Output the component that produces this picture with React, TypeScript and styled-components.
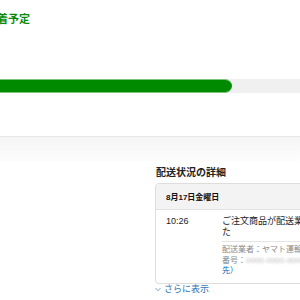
import styled, { createGlobalStyle } from "styled-components";

const GlobalStyle = createGlobalStyle`
  html, body {
    margin: 0;
    padding: 0;
    background: #ffffff;
  }
  body {
    font-family: "Liberation Sans", "Noto Sans CJK JP", sans-serif;
    color: #111111;
  }
`;

export default function App() {
  const progress = 232;

  return (
    <Page>
      <GlobalStyle />
      <Title>到着予定</Title>
      <Track>
        <Fill style={{ width: progress }} />
      </Track>
      <Divider />
      <Columns>
        <div />
        <Details>
          <Heading>配送状況の詳細</Heading>
          <Card>
            <CardHeader>8月17日金曜日</CardHeader>
            <EventRow>
              <Time>10:26</Time>
              <EventBody>
                <Message>
                  ご注文商品が配送業者に引き渡されまし
                  <br />
                  た
                </Message>
                <Carrier>
                  <Line>配送業者：ヤマト運輸、お問い合わせ伝票</Line>
                  <Line>
                    番号：<Blurred>0000-0000-0000</Blurred>
                  </Line>
                  <Line>
                    <TrackLink>先）</TrackLink>
                  </Line>
                </Carrier>
              </EventBody>
            </EventRow>
          </Card>
          <MoreLink>
            <svg width="6" height="5" viewBox="0 0 6 5">
              <path d="M0.5 1 L3 3.8 L5.5 1" fill="none" stroke="#8aa4c0" strokeWidth="1" />
            </svg>
            さらに表示
          </MoreLink>
        </Details>
      </Columns>
    </Page>
  );
}

const Page = styled.div`
  width: 300px;
  height: 300px;
  overflow: hidden;
  position: relative;
`;

const Title = styled.h1`
  margin: 13px 0 0 -14px;
  font-size: 11px;
  line-height: 13px;
  font-weight: 700;
  color: #0a8a0a;
  white-space: nowrap;
`;

const Track = styled.div`
  margin-top: 53px;
  height: 14px;
  background: #f0f0f0;
  width: 100%;
`;

const Fill = styled.div`
  height: 14px;
  box-sizing: border-box;
  background: #008a00;
  border-top: 1px solid #7cc47c;
  border-bottom: 1px solid #7cc47c;
  border-radius: 0 7px 7px 0;
`;

const Divider = styled.div`
  margin-top: 43px;
  height: 24px;
  border-top: 1px solid #e8e8e8;
  background: linear-gradient(#f5f5f5, #fdfdfd);
`;

const Columns = styled.div`
  display: grid;
  grid-template-columns: 155px 230px;
`;

const Details = styled.section`
  padding-top: 6px;
`;

const Heading = styled.h2`
  margin: 0 0 0 1px;
  font-size: 10px;
  line-height: 12px;
  font-weight: 700;
  color: #222222;
  white-space: nowrap;
`;

const Card = styled.div`
  margin-top: 4px;
  border: 1px solid #dddddd;
  border-radius: 4px;
  overflow: hidden;
`;

const CardHeader = styled.div`
  height: 25px;
  padding-left: 10px;
  display: flex;
  align-items: center;
  background: #f3f3f3;
  border-bottom: 1px solid #e3e3e3;
  font-size: 8px;
  font-weight: 700;
  white-space: nowrap;
`;

const EventRow = styled.div`
  display: grid;
  grid-template-columns: 56px 1fr;
  padding: 6px 0 6px 10px;
`;

const Time = styled.div`
  font-size: 9px;
  line-height: 11px;
  color: #222222;
`;

const EventBody = styled.div`
  min-width: 0;
`;

const Message = styled.div`
  font-size: 9px;
  line-height: 11px;
  color: #222222;
  white-space: nowrap;
`;

const Carrier = styled.div`
  margin-top: 3px;
  padding-top: 3px;
  border-top: 1px solid #e5e5e5;
`;

const Line = styled.div`
  font-size: 8px;
  line-height: 10.5px;
  color: #888888;
  white-space: nowrap;
`;

const Blurred = styled.span`
  color: #bbbbbb;
  filter: blur(1.2px);
`;

const TrackLink = styled.span`
  color: #0066c0;
`;

const MoreLink = styled.div`
  margin-top: 0;
  display: flex;
  align-items: center;
  gap: 3px;
  font-size: 9px;
  line-height: 11px;
  color: #2f74b5;
  white-space: nowrap;

  svg {
    margin-top: 1px;
  }
`;
